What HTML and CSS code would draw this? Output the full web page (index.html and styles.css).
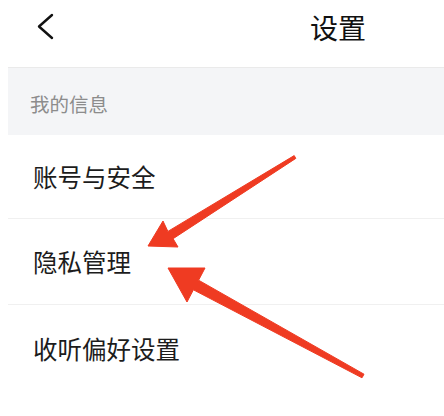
FILE: index.html
```html
<!DOCTYPE html>
<html>
<head>
    <meta charset="UTF-8">
    <title>设置</title>
    <link rel="stylesheet" href="styles.css">
</head>
<body>
    <div class="page">
        <!-- Top bar -->
        <div class="topbar">
            <svg class="back" width="20" height="28" viewBox="0 0 20 28">
                <polyline points="16,2 3,13.5 16,25" fill="none" stroke="#111" stroke-width="2.4" stroke-linecap="round" stroke-linejoin="round"/>
            </svg>
            <div class="title">设置</div>
        </div>

        <!-- My info section -->
        <div class="section">我的信息</div>
        <div class="item">账号与安全</div>
        <div class="item">隐私管理</div>
        <div class="item">收听偏好设置</div>
    </div>

    <!-- Annotation arrows -->
    <svg class="marks" width="444" height="416" viewBox="0 0 444 416">
        <polygon fill="#ef3b22" stroke="#ef3b22" stroke-width="1" stroke-linejoin="round"
            points="294.2,155.6 167.9,231.4 163,221 148,246 178,247 173.1,238.7 295.8,158.4"/>
        <polygon fill="#ef3b22" stroke="#ef3b22" stroke-width="1" stroke-linejoin="round"
            points="364,374.2 198.6,280.2 205,268 168,268 187,302 193.4,289.8 362,377.8"/>
    </svg>
</body>
</html>
```
FILE: styles.css
```css
body { margin: 0; background: #fff; font-family: "Noto Sans CJK SC", "Noto Sans", sans-serif; color: #1c1c1c; position: relative; overflow: hidden; }
.page { margin-left: 8px; }
.topbar { height: 67px; box-sizing: border-box; padding-bottom: 13px; display: flex; align-items: center; }
.back { margin-left: 28px; }
.title { margin-left: auto; margin-right: 78px; font-size: 28px; line-height: 1; color: #111; }
.section { height: 68px; box-sizing: border-box; border-top: 1px solid #eaeaea; background: #f4f5f7; padding-left: 22px; padding-top: 4px; display: flex; align-items: center; font-size: 19.5px; color: #8c8c8c; }
.item { height: 84px; box-sizing: border-box; padding-left: 25px; border-bottom: 1px solid #f0f0f0; display: flex; align-items: center; font-size: 24.5px; }
.item + .item { height: 86px; }
.item:last-child { border-bottom: none; }
.marks { position: absolute; top: 0; left: 0; pointer-events: none; }
```
